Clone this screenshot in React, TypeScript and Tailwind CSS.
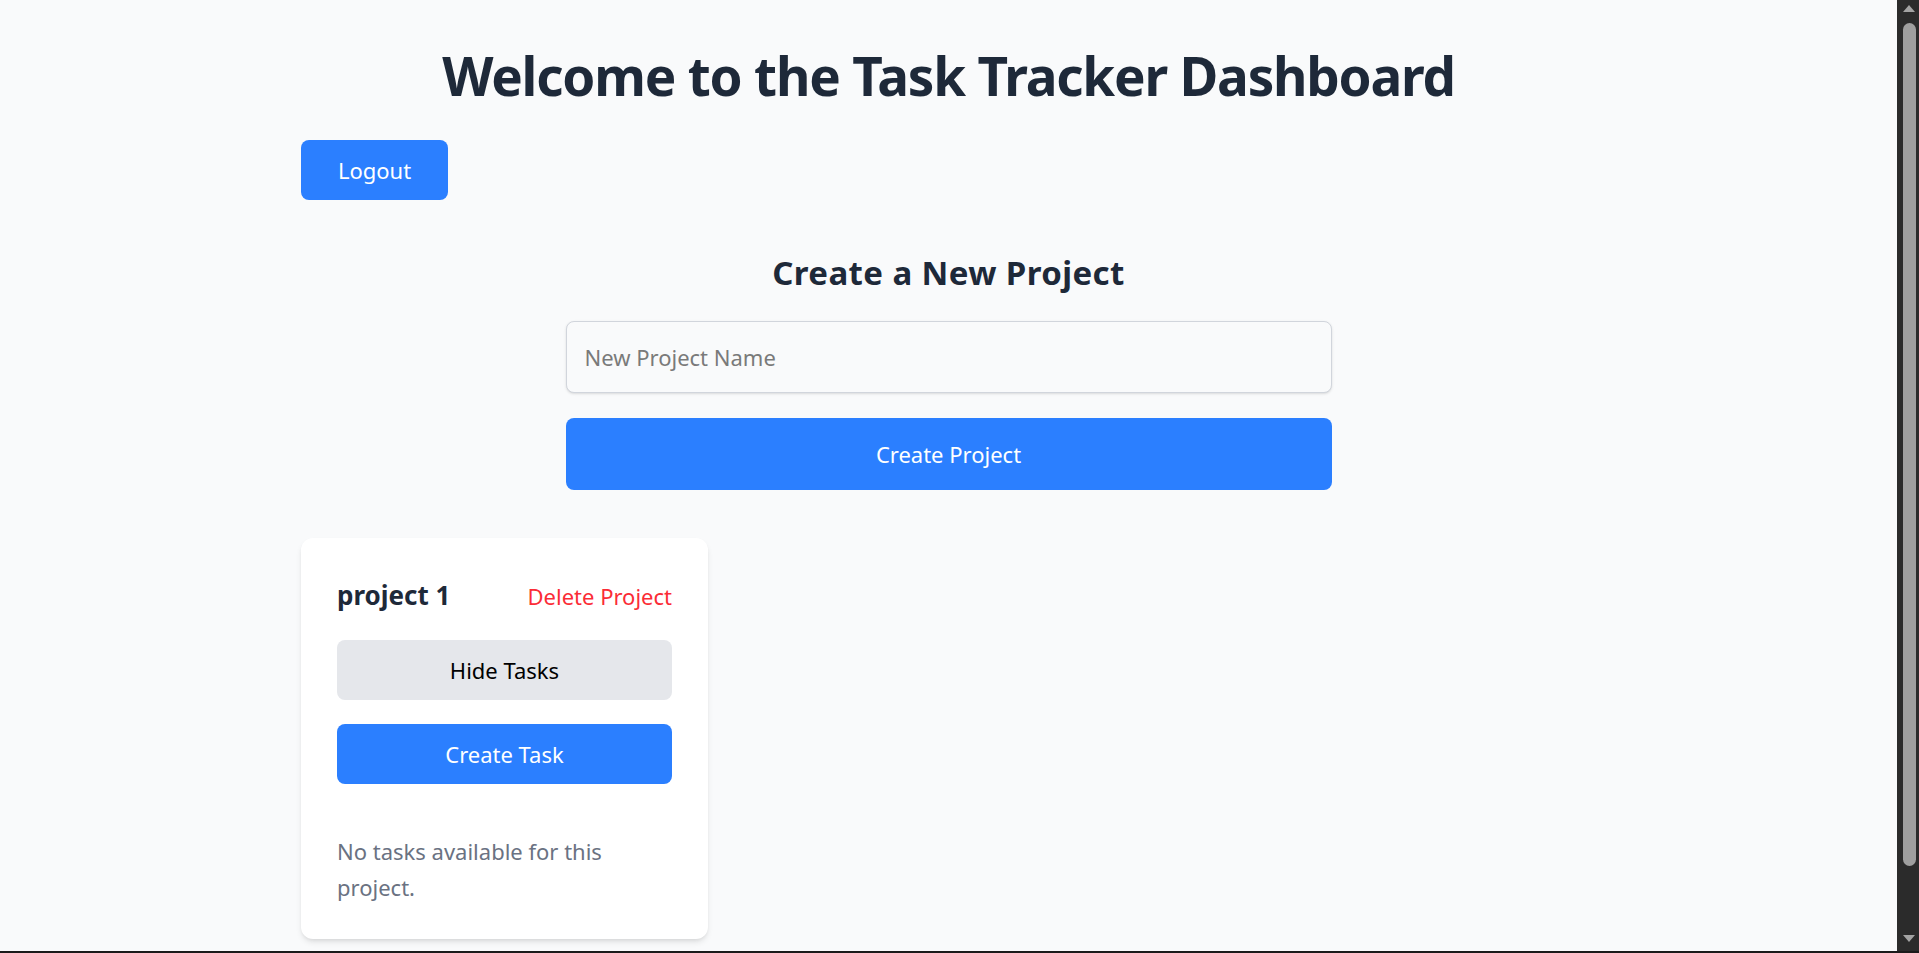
import { useState } from 'react';

type Project = {
  id: number;
  name: string;
  tasks: string[];
};

const font = { fontFamily: '"Noto Sans", "Open Sans", sans-serif' };

function ProjectCard({ project }: { project: Project }) {
  const [showTasks, setShowTasks] = useState(true);

  return (
    <div className="w-[407px] rounded-[12px] bg-white px-[36px] pt-[40px] pb-[34px] shadow-md">
      <div className="flex items-center justify-between">
        <h3 className="text-[26px] leading-[35px] font-bold text-[#1e2939]">{project.name}</h3>
        <button className="text-[22px] leading-[30px] text-[#fb2c36]">Delete Project</button>
      </div>

      <button
        onClick={() => setShowTasks(!showTasks)}
        className="mt-[27px] flex h-[60px] w-full items-center justify-center rounded-[8px] bg-[#e5e7eb] text-[22px] text-black"
      >
        {showTasks ? 'Hide Tasks' : 'Show Tasks'}
      </button>

      <button className="mt-[24px] flex h-[60px] w-full items-center justify-center rounded-[8px] bg-[#2b7fff] text-[22px] text-white">
        Create Task
      </button>

      {showTasks && (
        <div className="mt-[49px]">
          {project.tasks.length === 0 ? (
            <p className="text-[22px] leading-[36px] text-[#6a7282]">No tasks available for this project.</p>
          ) : (
            <ul>
              {project.tasks.map((t) => (
                <li key={t}>{t}</li>
              ))}
            </ul>
          )}
        </div>
      )}
    </div>
  );
}

// window scrollbar as it appears in the screenshot
function Scrollbar() {
  return (
    <div className="flex w-[22px] shrink-0 flex-col items-center bg-[#2b2b2b]">
      <div className="flex h-[17px] w-full items-center justify-center pl-[2px]">
        <svg width="12" height="7" viewBox="0 0 12 7">
          <polygon points="6,0 12,7 0,7" fill="#a3a3a3" />
        </svg>
      </div>
      <div className="mt-[6px] ml-[2px] h-[843px] w-[13px] rounded-full bg-[#9f9f9f]" />
      <div className="flex-1" />
      <div className="mb-[4px] flex h-[17px] w-full items-center justify-center pl-[2px]">
        <svg width="12" height="7" viewBox="0 0 12 7">
          <polygon points="0,0 12,0 6,7" fill="#a3a3a3" />
        </svg>
      </div>
    </div>
  );
}

export default function App() {
  const [name, setName] = useState('');
  const projects: Project[] = [{ id: 1, name: 'project 1', tasks: [] }];

  return (
    <div className="flex h-screen flex-col bg-[#1b1b1b]" style={font}>
      <div className="flex min-h-0 flex-1">
        <main className="min-w-0 flex-1 overflow-hidden bg-[#f9fafb]">
          <div className="mx-auto w-[1295px] pt-[49px] pb-[100px]">
            <h1 className="text-center text-[53px] leading-[53px] font-bold tracking-[-1.2px] text-[#1e2939]">
              Welcome to the Task Tracker Dashboard
            </h1>

            <button className="mt-[38px] flex h-[60px] w-[147px] items-center justify-center rounded-[8px] bg-[#2b7fff] text-[22px] text-white">
              Logout
            </button>

            <div className="mx-auto mt-[53px] flex w-[766px] flex-col">
              <h2 className="text-center text-[33px] leading-[40px] font-bold tracking-[0.4px] text-[#1e2939]">
                Create a New Project
              </h2>
              <input
                value={name}
                onChange={(e) => setName(e.target.value)}
                placeholder="New Project Name"
                className="mt-[28px] h-[72px] w-full rounded-[8px] border border-[#d1d5dc] bg-[#f9fafb] px-[18px] text-[22px] text-[#1e2939] shadow-sm outline-none placeholder:text-[#7a7a7a]"
              />
              <button className="mt-[25px] h-[72px] w-full rounded-[8px] bg-[#2b7fff] text-[22px] text-white">
                Create Project
              </button>
            </div>

            <div className="mt-[48px] flex flex-wrap gap-6">
              {projects.map((p) => (
                <ProjectCard key={p.id} project={p} />
              ))}
            </div>
          </div>
        </main>
        <Scrollbar />
      </div>
      <div className="h-[2px] bg-[#1b1b1b]" />
    </div>
  );
}
